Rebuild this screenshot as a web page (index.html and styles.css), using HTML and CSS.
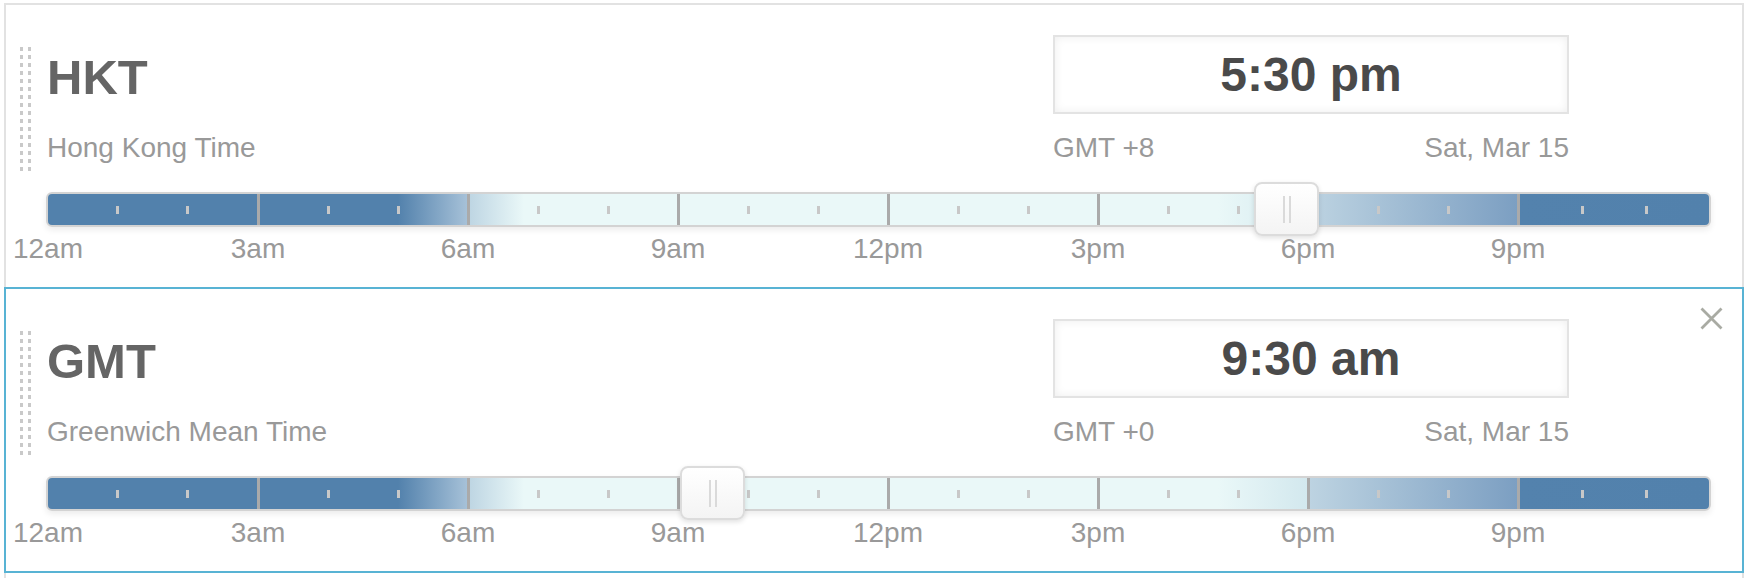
FILE: index.html
```html
<!DOCTYPE html>
<html lang="en">
<head>
  <meta charset="UTF-8">
  <meta name="viewport" content="width=device-width, initial-scale=1.0">
  <title>World Clock</title>
  <link rel="stylesheet" href="styles.css">
</head>
<body>
  <div class="zone-list">

    <div class="zone">
      <span class="handle"></span>
      <div class="zone-head">
        <div class="zone-names">
          <h2 class="abbr">HKT</h2>
          <p class="full-name">Hong Kong Time</p>
        </div>
        <div class="clock">
          <div class="time-box">5:30 pm</div>
          <div class="meta"><span>GMT +8</span><span>Sat, Mar 15</span></div>
        </div>
      </div>
      <div class="day-bar">
        <div class="seg"><i></i><i></i></div>
        <div class="seg"><i></i><i></i></div>
        <div class="seg"><i></i><i></i></div>
        <div class="seg"><i></i><i></i></div>
        <div class="seg"><i></i><i></i></div>
        <div class="seg"><i></i><i></i></div>
        <div class="seg"><i></i><i></i></div>
        <div class="seg"><i></i><i></i></div>
        <div class="thumb" style="left: 1206px"><span class="grip"></span></div>
      </div>
      <div class="hours">
        <span>12am</span><span>3am</span><span>6am</span><span>9am</span>
        <span>12pm</span><span>3pm</span><span>6pm</span><span>9pm</span>
      </div>
    </div>

    <div class="zone active">
      <span class="handle"></span>
      <button class="close" title="Remove">
        <svg width="23" height="23" viewBox="0 0 23 23"><path d="M1.5 1.5 L21.5 21.5 M21.5 1.5 L1.5 21.5" stroke="#a9aba3" stroke-width="2.8" fill="none"/></svg>
      </button>
      <div class="zone-head">
        <div class="zone-names">
          <h2 class="abbr">GMT</h2>
          <p class="full-name">Greenwich Mean Time</p>
        </div>
        <div class="clock">
          <div class="time-box">9:30 am</div>
          <div class="meta"><span>GMT +0</span><span>Sat, Mar 15</span></div>
        </div>
      </div>
      <div class="day-bar">
        <div class="seg"><i></i><i></i></div>
        <div class="seg"><i></i><i></i></div>
        <div class="seg"><i></i><i></i></div>
        <div class="seg"><i></i><i></i></div>
        <div class="seg"><i></i><i></i></div>
        <div class="seg"><i></i><i></i></div>
        <div class="seg"><i></i><i></i></div>
        <div class="seg"><i></i><i></i></div>
        <div class="thumb" style="left: 632px"><span class="grip"></span></div>
      </div>
      <div class="hours">
        <span>12am</span><span>3am</span><span>6am</span><span>9am</span>
        <span>12pm</span><span>3pm</span><span>6pm</span><span>9pm</span>
      </div>
    </div>

    <div class="zone stub"></div>

  </div>
</body>
</html>
```

FILE: styles.css
```css
html, body {
  margin: 0;
  height: 578px;
  overflow: hidden;
  background-color: #fff;
}
body {
  font-family: "Liberation Sans", Arial, sans-serif;
  color: #999;
}
.zone-list {
  padding: 3px 2px 0 4px;
}
.zone {
  position: relative;
  box-sizing: border-box;
  height: 286px;
  padding-left: 38px;
  border: 2px solid #e2e2e2;
  background-color: #fff;
}
.zone + .zone {
  margin-top: -2px;
}
.zone.active {
  border-color: #58b3d4;
  z-index: 1;
}
.zone.stub {
  height: 8px;
  border-bottom: none;
}

/* drag handle */
.handle {
  position: absolute;
  left: 14px;
  top: 42px;
  width: 11px;
  height: 124px;
  background-image: linear-gradient(#c9c9c9 4px, transparent 4px), linear-gradient(#c9c9c9 4px, transparent 4px);
  background-size: 3px 8px;
  background-position: 0 0, 8px 0;
  background-repeat: repeat-y;
}
.close {
  position: absolute;
  top: 18px;
  right: 19px;
  padding: 0;
  border: none;
  background: none;
  width: 23px;
  height: 23px;
  cursor: pointer;
}
.close svg {
  display: block;
}

.zone-head {
  display: flex;
  align-items: flex-start;
  padding-right: 173px;
}
.zone-names {
  flex: 1;
  padding: 47px 0 0 3px;
}
.abbr {
  margin: 0;
  font-size: 49px;
  line-height: 50px;
  font-weight: bold;
  color: #656565;
}
.full-name {
  margin: 30px 0 0;
  font-size: 28px;
  line-height: 32px;
}
.clock {
  width: 516px;
  padding-top: 30px;
}
.time-box {
  box-sizing: border-box;
  height: 79px;
  line-height: 75px;
  border: 2px solid #e3e3e3;
  box-shadow: inset 0 0 10px rgba(0, 0, 0, 0.07);
  text-align: center;
  font-size: 48px;
  font-weight: bold;
  color: #4a4a4a;
}
.meta {
  display: flex;
  justify-content: space-between;
  margin-top: 18px;
  font-size: 28px;
  line-height: 32px;
}

/* 24 hour bar */
.day-bar {
  position: relative;
  display: grid;
  grid-template-columns: 209px repeat(6, 210px) 1fr;
  box-sizing: border-box;
  height: 35px;
  margin: 28px 31px 0 2px;
  border: 2px solid #d3d3d3;
  border-radius: 6px;
  box-shadow: 0 3px 6px rgba(0, 0, 0, 0.08);
  background: linear-gradient(to right,
    #5281ac 0, #5281ac 350px,
    #a6c1d8 419px, #bcd4e2 419px,
    #eaf8f8 476px, #eaf8f8 1170px,
    #d3e8ee 1259px, #bed4e2 1259px,
    #7c9fc2 1469px, #5382ad 1469px,
    #5281ac 100%);
}
.seg {
  display: flex;
  justify-content: space-evenly;
  align-items: center;
}
.seg + .seg {
  border-left: 3px solid #aaa;
}
.seg i {
  width: 3px;
  height: 8px;
  background-color: #c8c8c8;
}
.thumb {
  position: absolute;
  top: -12px;
  box-sizing: border-box;
  width: 65px;
  height: 54px;
  display: flex;
  justify-content: center;
  align-items: center;
  border: 2px solid #dcdcdc;
  border-radius: 8px;
  background: linear-gradient(#fff, #f4f4f4);
  box-shadow: 0 2px 5px rgba(0, 0, 0, 0.12);
}
.grip {
  width: 4px;
  height: 27px;
  border-left: 2px solid #dadada;
  border-right: 2px solid #dadada;
}

.hours {
  display: grid;
  grid-template-columns: repeat(7, 210px) 1fr;
  margin: 6px 0 0 4px;
  font-size: 28px;
  line-height: 32px;
}
.hours span {
  justify-self: start;
  transform: translateX(-50%);
}
```
